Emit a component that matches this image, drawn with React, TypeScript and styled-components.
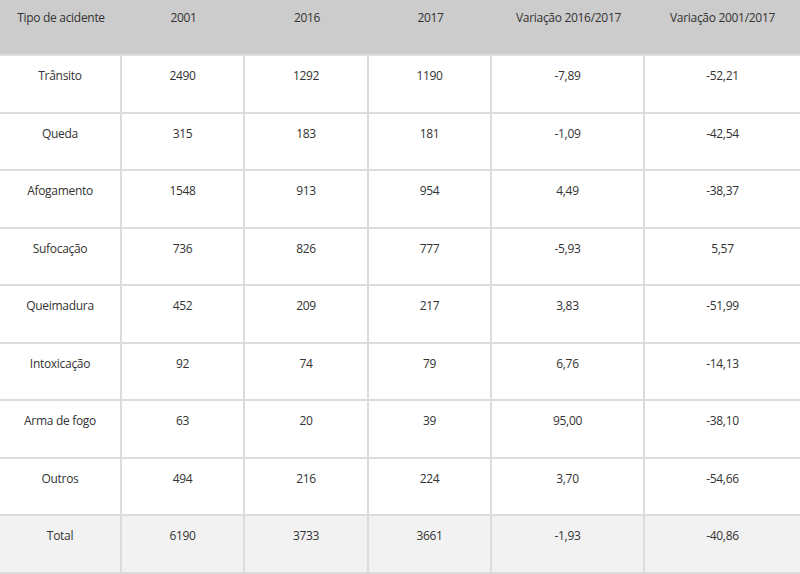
import React from "react";
import styled, { createGlobalStyle } from "styled-components";

const GlobalStyle = createGlobalStyle`
  html, body { margin: 0; padding: 0; background: #ffffff; }
  body { font-family: "Open Sans", "Noto Sans", "Liberation Sans", sans-serif; }
`;

const Grid = styled.div`
  display: grid;
  grid-template-columns: 122px 123px 124px 123px 153px 155px;
  grid-template-rows: 56px repeat(9, 1fr);
  width: 800px;
  height: 574px;
  font-size: 12px;
  line-height: 17px;
  letter-spacing: -0.3px;
  color: #333333;
`;

const HeadCell = styled.div`
  background: #cccccc;
  border-bottom: 2px solid #dedede;
  padding-top: 9px;
  text-align: center;
  white-space: nowrap;
`;

const Cell = styled.div<{ $last?: boolean; $total?: boolean }>`
  background: ${(p) => (p.$total ? "#f2f2f2" : "#ffffff")};
  border-bottom: 2px solid #dcdcdc;
  border-right: ${(p) => (p.$last ? "none" : "2px solid #dcdcdc")};
  padding-top: 11px;
  text-align: center;
  white-space: nowrap;
`;

const headers = [
  "Tipo de acidente",
  "2001",
  "2016",
  "2017",
  "Variação 2016/2017",
  "Variação 2001/2017",
];

const rows: string[][] = [
  ["Trânsito", "2490", "1292", "1190", "-7,89", "-52,21"],
  ["Queda", "315", "183", "181", "-1,09", "-42,54"],
  ["Afogamento", "1548", "913", "954", "4,49", "-38,37"],
  ["Sufocação", "736", "826", "777", "-5,93", "5,57"],
  ["Queimadura", "452", "209", "217", "3,83", "-51,99"],
  ["Intoxicação", "92", "74", "79", "6,76", "-14,13"],
  ["Arma de fogo", "63", "20", "39", "95,00", "-38,10"],
  ["Outros", "494", "216", "224", "3,70", "-54,66"],
  ["Total", "6190", "3733", "3661", "-1,93", "-40,86"],
];

export default function App() {
  return (
    <>
      <GlobalStyle />
      <Grid>
        {headers.map((h) => (
          <HeadCell key={h}>{h}</HeadCell>
        ))}
        {rows.map((r, ri) =>
          r.map((v, ci) => (
            <Cell
              key={`${ri}-${ci}`}
              $last={ci === r.length - 1}
              $total={ri === rows.length - 1}
            >
              {v}
            </Cell>
          ))
        )}
      </Grid>
    </>
  );
}
